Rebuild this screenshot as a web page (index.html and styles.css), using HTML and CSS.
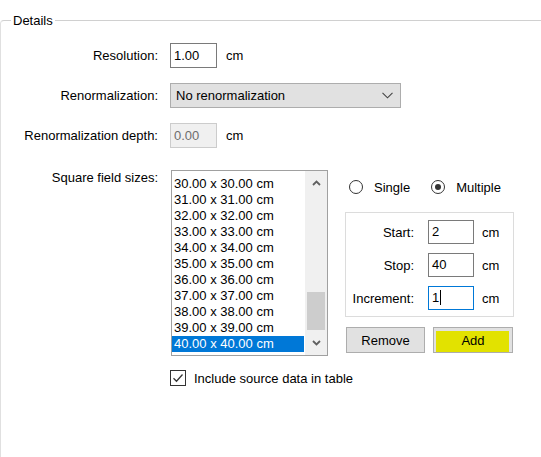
FILE: index.html
```html
<!DOCTYPE html>
<html lang="en">
<head>
    <meta charset="UTF-8">
    <meta name="viewport" content="width=device-width, initial-scale=1.0">
    <title>Details</title>
    <link rel="stylesheet" href="styles.css">
</head>
<body>
    <fieldset class="group">
        <legend>Details</legend>
        <div class="form">
            <!-- Resolution -->
            <label class="label">Resolution:</label>
            <div class="field">
                <div class="textbox">1.00</div>
                <span class="unit">cm</span>
            </div>

            <!-- Renormalization -->
            <label class="label">Renormalization:</label>
            <div class="field">
                <div class="combo">
                    <span class="combo-text">No renormalization</span>
                    <svg width="11" height="7" viewBox="0 0 11 7"><path d="M0.5 0.8 L5.5 5.8 L10.5 0.8" fill="none" stroke="#444" stroke-width="1.1"/></svg>
                </div>
            </div>

            <!-- Depth -->
            <label class="label">Renormalization depth:</label>
            <div class="field">
                <div class="textbox disabled">0.00</div>
                <span class="unit">cm</span>
            </div>

            <!-- Square field sizes -->
            <label class="label label-top">Square field sizes:</label>
            <div class="field sizes">
                <div class="listbox">
                    <ul class="items">
                        <li>30.00 x 30.00 cm</li>
                        <li>31.00 x 31.00 cm</li>
                        <li>32.00 x 32.00 cm</li>
                        <li>33.00 x 33.00 cm</li>
                        <li>34.00 x 34.00 cm</li>
                        <li>35.00 x 35.00 cm</li>
                        <li>36.00 x 36.00 cm</li>
                        <li>37.00 x 37.00 cm</li>
                        <li>38.00 x 38.00 cm</li>
                        <li>39.00 x 39.00 cm</li>
                        <li class="selected">40.00 x 40.00 cm</li>
                    </ul>
                    <div class="scrollbar">
                        <div class="arrow">
                            <svg width="9" height="6" viewBox="0 0 9 6"><path d="M1 5 L4.5 1.5 L8 5" fill="none" stroke="#606060" stroke-width="1.8"/></svg>
                        </div>
                        <div class="track"><div class="thumb"></div></div>
                        <div class="arrow">
                            <svg width="9" height="6" viewBox="0 0 9 6"><path d="M1 1 L4.5 4.5 L8 1" fill="none" stroke="#606060" stroke-width="1.8"/></svg>
                        </div>
                    </div>
                </div>

                <div class="side">
                    <div class="radios">
                        <label class="radio"><span class="dot"></span>Single</label>
                        <label class="radio multiple"><span class="dot checked"></span>Multiple</label>
                    </div>

                    <div class="range">
                        <span class="range-label">Start:</span>
                        <div class="textbox small">2</div>
                        <span class="unit">cm</span>

                        <span class="range-label">Stop:</span>
                        <div class="textbox small">40</div>
                        <span class="unit">cm</span>

                        <span class="range-label">Increment:</span>
                        <div class="textbox small focused">1<span class="caret"></span></div>
                        <span class="unit">cm</span>
                    </div>

                    <div class="buttons">
                        <button type="button" class="btn">Remove</button>
                        <button type="button" class="btn btn-add">Add</button>
                    </div>
                </div>
            </div>

            <!-- Checkbox -->
            <div></div>
            <div class="field check">
                <span class="checkbox">
                    <svg width="14" height="14" viewBox="0 0 14 14"><path d="M2.5 7.2 L5.5 10.2 L11.5 3.5" fill="none" stroke="#333" stroke-width="1.3"/></svg>
                </span>
                <span>Include source data in table</span>
            </div>
        </div>
    </fieldset>
</body>
</html>
```

FILE: styles.css
```css
/* Basic Reset */
body, html {
    margin: 0;
    padding: 0;
    background: #fff;
    font-family: "Liberation Sans", Arial, sans-serif;
    font-size: 13px;
    color: #000;
    overflow: hidden;
}

/* Group box */
.group {
    margin: 13px 0 0 0;
    padding: 0;
    height: 444px;
    border: 1px solid #d0d0d0;
    border-right: none;
    border-bottom: none;
    border-radius: 4px 0 0 0;
    border-left-color: #e0e0e0;
}

.group legend {
    margin-left: 10px;
    padding: 0 2px;
    line-height: 15px;
}

/* Main form grid */
.form {
    display: grid;
    grid-template-columns: 156px auto;
    column-gap: 12px;
    row-gap: 15px;
    padding: 15px 0 0 1px;
    align-items: center;
}

.label {
    text-align: right;
    line-height: 15px;
}

.label-top {
    align-self: start;
    margin-top: 7px;
}

.field {
    display: flex;
    align-items: center;
    height: 25px;
}

.unit {
    margin-left: 9px;
}

/* Text boxes */
.textbox {
    width: 47px;
    height: 25px;
    box-sizing: border-box;
    border: 1px solid #7a7a7a;
    padding-left: 3px;
    line-height: 23px;
    background: #fff;
}

.textbox.disabled {
    border-color: #cccccc;
    background: #f0f0f0;
    color: #6d6d6d;
}

.textbox.small {
    width: 46px;
    height: 24px;
    line-height: 22px;
}

.textbox.focused {
    border-color: #0078d7;
}

.caret {
    display: inline-block;
    width: 1px;
    height: 15px;
    background: #000;
    vertical-align: -3px;
    margin-left: 1px;
}

/* Combo box */
.combo {
    display: flex;
    align-items: center;
    width: 231px;
    height: 25px;
    box-sizing: border-box;
    border: 1px solid #adadad;
    background: #e1e1e1;
    padding: 0 7px 0 5px;
}

.combo-text {
    flex: 1;
}

/* Square field sizes */
.field.sizes {
    height: auto;
    align-items: flex-start;
    margin-top: 7px;
}

.listbox {
    display: flex;
    width: 157px;
    height: 186px;
    box-sizing: border-box;
    margin-left: 1px;
    border: 1px solid #a0a0a0;
    background: #fff;
}

.items {
    flex: 1;
    list-style: none;
    margin: 0;
    padding: 5px 1px 0 0;
}

.items li {
    height: 16px;
    line-height: 16px;
    padding-left: 2px;
}

.items li.selected {
    background: #0078d7;
    color: #fff;
}

.scrollbar {
    display: flex;
    flex-direction: column;
    width: 22px;
    background: #f0f0f0;
}

.arrow {
    display: flex;
    align-items: center;
    justify-content: center;
    height: 24px;
}

.track {
    flex: 1;
    display: flex;
    flex-direction: column;
    justify-content: flex-end;
}

.thumb {
    height: 38px;
    margin: 0 2px 1px 2px;
    background: #cdcdcd;
}

/* Right side panel */
.side {
    margin-left: 17px;
    width: 169px;
}

.radios {
    display: flex;
    align-items: center;
    margin-top: 10px;
    padding-left: 4px;
    height: 14px;
}

.radio {
    display: flex;
    align-items: center;
}

.radio.multiple {
    margin-left: 21px;
}

.dot {
    width: 14px;
    height: 14px;
    box-sizing: border-box;
    border: 1px solid #333;
    border-radius: 50%;
    margin-right: 11px;
    display: flex;
    align-items: center;
    justify-content: center;
}

.dot.checked::after {
    content: "";
    width: 6px;
    height: 6px;
    border-radius: 50%;
    background: #333;
}

/* Start / Stop / Increment box */
.range {
    display: grid;
    grid-template-columns: 82px 46px auto;
    row-gap: 9px;
    align-items: center;
    margin-top: 18px;
    padding: 7px 0 6px 0;
    border: 1px solid #dcdcdc;
}

.range-label {
    text-align: right;
    padding-right: 14px;
}

.range .unit {
    margin-left: 8px;
}

/* Buttons */
.buttons {
    display: flex;
    gap: 8px;
    margin-top: 10px;
    padding-left: 1px;
}

.btn {
    width: 79px;
    height: 26px;
    font-family: inherit;
    font-size: 13px;
    color: #000;
    border: 1px solid #adadad;
    background: #e1e1e1;
    padding: 0;
}

.btn-add {
    width: 80px;
    background: #e2e200;
    box-shadow: inset 0 3px 0 #e1e1e1, inset 2px 0 0 #e1e1e1, inset -3px 0 0 #e1e1e1;
}

/* Checkbox */
.field.check {
    height: 16px;
    margin-top: -1px;
}

.checkbox {
    display: flex;
    align-items: center;
    justify-content: center;
    width: 16px;
    height: 16px;
    box-sizing: border-box;
    border: 1px solid #333;
    margin-right: 8px;
}
```
